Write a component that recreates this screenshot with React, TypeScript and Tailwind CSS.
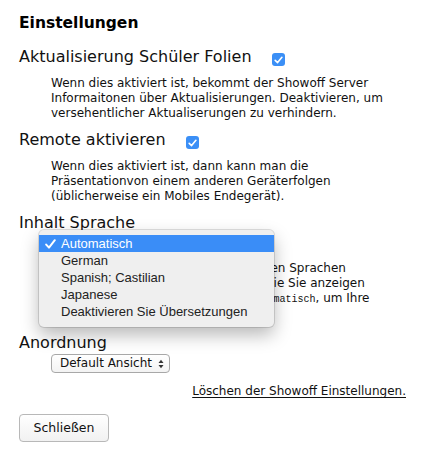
import type { ReactNode } from 'react';

const CheckBox = () => (
  <span className="ml-[20px] mt-[6px] flex h-[13px] w-[13px] shrink-0 items-center justify-center rounded-[3px] bg-[#3b8ff6]">
    <svg width="9" height="8" viewBox="0 0 9 8">
      <path d="M1.2 4.3 L3.6 6.6 L7.9 1.3" fill="none" stroke="white" strokeWidth="1.6" strokeLinecap="round" strokeLinejoin="round" />
    </svg>
  </span>
);

const UpDown = () => (
  <svg width="6" height="10" viewBox="0 0 6 10" className="shrink-0">
    <path d="M0.5 4 L3 0.8 L5.5 4 Z" fill="#333" />
    <path d="M0.5 6 L3 9.2 L5.5 6 Z" fill="#333" />
  </svg>
);

// looks like a closed native <select>
const FakeSelect = ({ value, width }: { value: string; width: string }) => (
  <div
    className={`ml-[32px] flex h-[19px] items-center justify-between rounded-[4px] border border-[#a8a8a8] bg-gradient-to-b from-white to-[#f3f3f3] pl-[8px] pr-[5px] text-[12px] leading-[17px] ${width}`}
  >
    <span>{value}</span>
    <UpDown />
  </div>
);

const Section = ({ label, checked, children }: { label: string; checked?: boolean; children?: ReactNode }) => (
  <div className="flex flex-col">
    <div className="flex items-start text-[16px] leading-[20px]">
      <span>{label}</span>
      {checked && <CheckBox />}
    </div>
    {children}
  </div>
);

const languages = ['Automatisch', 'German', 'Spanish; Castilian', 'Japanese', 'Deaktivieren Sie Übersetzungen'];

export default function App() {
  return (
    <div className="relative h-[450px] w-[425px] overflow-hidden bg-white font-['DejaVu_Sans',sans-serif] text-[#111]">
      <div className="flex flex-col px-[19px] pt-[13px]">
        <h1 className="text-[15.5px] font-bold leading-[20px] text-black">Einstellungen</h1>

        <div className="mt-[14px] flex flex-col gap-[9px]">
          <Section label="Aktualisierung Schüler Folien" checked>
            <p className="mt-[9px] pl-[32px] text-[12px] leading-[15px]">
              Wenn dies aktiviert ist, bekommt der Showoff Server Informaitonen über Aktualisierungen. Deaktivieren, um
              versehentlicher Aktualiserungen zu verhindern.
            </p>
          </Section>

          <Section label="Remote aktivieren" checked>
            <p className="mt-[9px] pl-[32px] text-[12px] leading-[15px]">
              Wenn dies aktiviert ist, dann kann man die Präsentationvon einem anderen Geräterfolgen (üblicherweise ein
              Mobiles Endegerät).
            </p>
          </Section>

          <Section label="Inhalt Sprache">
            <div className="mt-[2px]">
              <FakeSelect value="Automatisch" width="w-[120px]" />
            </div>
            <p className="mt-[7px] pl-[32px] text-[12px] leading-[15px]">
              Showoff kann in eine der unterstützten Sprachen übersetzen. Wählen Sie die Option, die Sie anzeigen
              möchten, oder wählen Sie lieber{' '}
              <code className="font-['Liberation_Mono',monospace] text-[10px]">Automatisch</code>, um Ihre
              Browsersprache zu nutzen.
            </p>
          </Section>

          <div className="mt-[2px]">
            <Section label="Anordnung">
              <div className="mt-[1px]">
                <FakeSelect value="Default Ansicht" width="w-[119px]" />
              </div>
            </Section>
          </div>
        </div>

        <div className="mt-[11px] flex justify-end text-[12px] leading-[15px]">
          <a href="#" className="underline underline-offset-[2px]">
            Löschen der Showoff Einstellungen.
          </a>
        </div>

        <div className="mt-[15px]">
          <button className="h-[28px] w-[90px] rounded-[4px] border border-[#b8b8b8] bg-gradient-to-b from-white to-[#f1f1f1] text-[12.5px] text-[#111]">
            Schließen
          </button>
        </div>
      </div>

      {/* open language menu */}
      <div className="absolute left-[39px] top-[230px] w-[235px] rounded-[5px] bg-[#efefef] pb-[7px] pt-[5px] font-['Liberation_Sans',sans-serif] text-[13px] leading-[17px] text-[#222] shadow-[0_0_0_1px_rgba(0,0,0,0.12),0_8px_18px_rgba(0,0,0,0.28)]">
        {languages.map((lang, i) => (
          <div key={lang} className={`flex h-[17px] items-center ${i === 0 ? 'bg-[#3a8df7] text-white' : ''}`}>
            <span className="flex w-[22px] shrink-0 pl-[6px]">
              {i === 0 && (
                <svg width="11" height="10" viewBox="0 0 11 10">
                  <path d="M1.2 5.6 L4 8.6 L9.8 1.2" fill="none" stroke="white" strokeWidth="2" strokeLinecap="round" strokeLinejoin="round" />
                </svg>
              )}
            </span>
            <span>{lang}</span>
          </div>
        ))}
      </div>
    </div>
  );
}
